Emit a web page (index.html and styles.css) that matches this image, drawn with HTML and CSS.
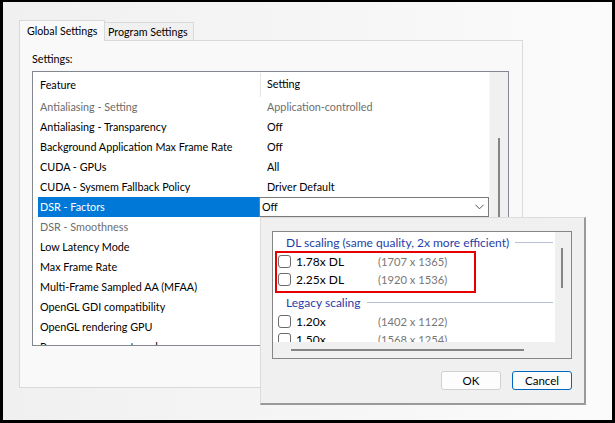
FILE: index.html
```html
<!DOCTYPE html>
<html lang="en">
<head>
    <meta charset="UTF-8">
    <title>NVIDIA Control Panel - Manage 3D settings</title>
    <link rel="stylesheet" href="styles.css">
</head>
<body>
    <div class="window">
        <div class="tabs">
            <div class="tab active">Global Settings</div>
            <div class="tab">Program Settings</div>
        </div>

        <div class="panel">
            <div class="label">Settings:</div>
            <div class="listbox">
                <div class="list">
                    <div class="row head">
                        <span class="feat">Feature</span>
                        <span class="val">Setting</span>
                    </div>
                    <div class="row dis"><span class="feat">Antialiasing - Setting</span><span class="val">Application-controlled</span></div>
                    <div class="row"><span class="feat">Antialiasing - Transparency</span><span class="val">Off</span></div>
                    <div class="row"><span class="feat">Background Application Max Frame Rate</span><span class="val">Off</span></div>
                    <div class="row"><span class="feat">CUDA - GPUs</span><span class="val">All</span></div>
                    <div class="row"><span class="feat">CUDA - Sysmem Fallback Policy</span><span class="val">Driver Default</span></div>
                    <div class="row sel">
                        <span class="feat">DSR - Factors</span>
                        <span class="val">
                            <span class="combo">
                                <span>Off</span>
                                <svg width="9" height="6" viewBox="0 0 9 6"><polyline points="0.5,0.8 4.5,4.8 8.5,0.8" fill="none" stroke="#555" stroke-width="1"/></svg>
                            </span>
                        </span>
                    </div>
                    <div class="row dis"><span class="feat">DSR - Smoothness</span><span class="val"></span></div>
                    <div class="row"><span class="feat">Low Latency Mode</span><span class="val"></span></div>
                    <div class="row"><span class="feat">Max Frame Rate</span><span class="val"></span></div>
                    <div class="row"><span class="feat">Multi-Frame Sampled AA (MFAA)</span><span class="val"></span></div>
                    <div class="row"><span class="feat">OpenGL GDI compatibility</span><span class="val"></span></div>
                    <div class="row"><span class="feat">OpenGL rendering GPU</span><span class="val"></span></div>
                    <div class="row"><span class="feat">Power management mode</span><span class="val"></span></div>
                </div>
                <div class="vscroll"><div class="thumb"></div></div>
            </div>
        </div>

        <!-- open dropdown of the DSR - Factors combo -->
        <div class="popup">
            <div class="optbox">
                <div class="opts">
                    <div class="grp">DL scaling (same quality, 2x more efficient)</div>
                    <div class="opt"><span class="cb"></span><span class="name">1.78x DL</span><span class="res">(1707 x 1365)</span></div>
                    <div class="opt"><span class="cb"></span><span class="name">2.25x DL</span><span class="res">(1920 x 1536)</span></div>
                    <div class="grp second">Legacy scaling</div>
                    <div class="opt"><span class="cb"></span><span class="name">1.20x</span><span class="res">(1402 x 1122)</span></div>
                    <div class="opt"><span class="cb"></span><span class="name">1.50x</span><span class="res">(1568 x 1254)</span></div>
                    <div class="mark"></div>
                </div>
                <div class="vs"><div class="vthumb"></div></div>
                <div class="hs"><div class="hthumb"></div></div>
                <div class="corner"></div>
            </div>
            <div class="btns">
                <div class="btn">OK</div>
                <div class="btn focus">Cancel</div>
            </div>
        </div>
    </div>
</body>
</html>
```

FILE: styles.css
```css
* {
    box-sizing: border-box;
    margin: 0;
    padding: 0;
}

body {
    width: 615px;
    height: 423px;
    overflow: hidden;
    font-family: Lato, "Segoe UI", sans-serif;
    font-size: 11.5px;
    color: #000;
}

.window {
    position: relative;
    width: 615px;
    height: 423px;
    border: 3px solid #000;
    border-top-width: 2px;
    background: linear-gradient(to right, #f0f0f0, #fbfbfb);
}

/* tabs */
.tabs {
    display: flex;
    align-items: flex-end;
    height: 38px;
    padding-left: 16px;
    font-size: 10.7px;
}

.tab {
    border: 1px solid #d9d9d9;
    border-bottom: none;
    white-space: nowrap;
}

.tab.active {
    position: relative;
    z-index: 1;
    width: 86px;
    height: 21px;
    margin-bottom: -1px;
    padding-left: 7px;
    line-height: 19px;
    background: #f9f9f9;
}

.tab:not(.active) {
    width: 90px;
    height: 18px;
    margin-left: -1px;
    padding-left: 4px;
    line-height: 18px;
    background: #f0f0f0;
    border-left: none;
}

.panel {
    width: 504px;
    height: 348px;
    margin-left: 16px;
    padding: 10px 0 0 12px;
    border: 1px solid #d9d9d9;
    background: #f9f9f9;
    font-size: 10.8px;
}

.label {
    height: 16px;
    line-height: 16px;
    margin-bottom: 4px;
}

/* settings list */
.listbox {
    display: flex;
    width: 477px;
    height: 275px;
    border: 1px solid #828790;
    background: #fff;
}

.list {
    flex: 1;
    overflow: hidden;
}

.row {
    display: flex;
    height: 20px;
    line-height: 20px;
    padding-left: 5px;
    white-space: nowrap;
}

.row .feat {
    width: 222px;
    padding-left: 2px;
}

.row .val {
    padding-left: 7px;
}

.row.head {
    height: 25px;
    line-height: 24px;
}

.row.head .feat {
    width: 223px;
    height: 24px;
    margin-top: 1px;
    line-height: 23px;
    border-right: 1px solid #e5e5e5;
}

.row.head .val {
    padding-left: 6px;
}

.row.dis {
    color: #6d6d6d;
}

.row.sel .feat {
    background: #0078d7;
    color: #fff;
}

.row.sel .val {
    padding-left: 0;
}

.combo {
    display: flex;
    justify-content: space-between;
    align-items: center;
    width: 230px;
    height: 20px;
    padding: 0 4px 0 2px;
    border: 1px solid #7a7a7a;
    background: #fff;
}

.vscroll {
    width: 19px;
    background: #f0f0f0;
    border-left: 1px solid #f6f6f6;
}

.thumb {
    width: 2px;
    height: 110px;
    margin: 66px 0 0 8px;
    background: #858585;
}

/* dropdown */
.popup {
    position: absolute;
    left: 257px;
    top: 215px;
    width: 326px;
    height: 188px;
    padding: 13px 9px 0 11px;
    background: #f0f0f0;
    border-top: 1px solid #dcdcdc;
    border-left: 1px solid #dcdcdc;
    border-right: 2px solid #9a9a9a;
    border-bottom: 2px solid #9a9a9a;
}

.optbox {
    display: grid;
    grid-template-columns: 1fr 16px;
    grid-template-rows: 1fr 16px;
    width: 300px;
    height: 128px;
    border: 1px solid #858585;
    background: #fff;
    font-size: 12px;
}

.opts {
    position: relative;
    overflow: hidden;
}

.grp {
    display: flex;
    align-items: center;
    height: 20px;
    padding-left: 13px;
    color: #1f3ea6;
    white-space: nowrap;
}

.grp::after {
    content: "";
    flex: 1;
    height: 1px;
    margin: 0 2px 0 6px;
    background: #b9c1d9;
}

.grp.second {
    margin-top: 4px;
}

.opt {
    display: flex;
    align-items: center;
    height: 18px;
    padding-left: 5px;
    white-space: nowrap;
}

.cb {
    width: 13px;
    height: 13px;
    margin-right: 5px;
    border: 1px solid #6b6b6b;
    border-radius: 3px;
    background: #fff;
}

.name {
    width: 82px;
}

.res {
    color: #777;
    font-size: 11.2px;
}

.mark {
    position: absolute;
    left: 2px;
    top: 19px;
    width: 201px;
    height: 42px;
    border: 2px solid #e60000;
}

.vs, .hs, .corner {
    background: #f0f0f0;
}

.vthumb {
    width: 2px;
    height: 40px;
    margin: 16px 0 0 6px;
    background: #858585;
}

.hthumb {
    width: 233px;
    height: 2px;
    margin: 7px 0 0 18px;
    background: #858585;
}

.btns {
    display: flex;
    justify-content: flex-end;
    gap: 11px;
    width: 300px;
    margin-top: 12px;
}

.btn {
    width: 60px;
    height: 19px;
    line-height: 17px;
    text-align: center;
    border: 1px solid #d0d0d0;
    border-radius: 3px;
    background: #fdfdfd;
}

.btn.focus {
    border-color: #0067c0;
}
```
